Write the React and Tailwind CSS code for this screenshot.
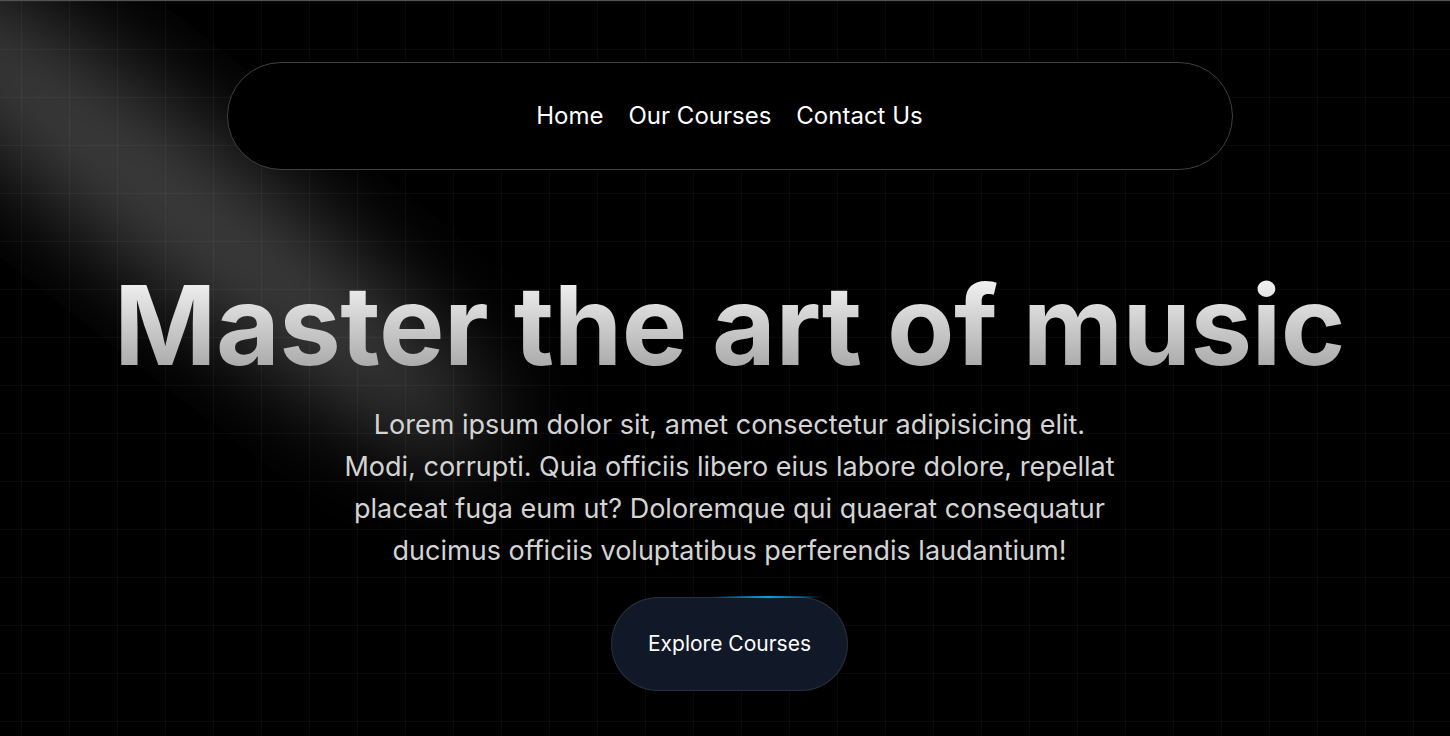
import React from "react";

const Spotlight = () => (
  <svg
    className="pointer-events-none absolute left-0 top-0 h-[736px] w-[1450px]"
    viewBox="0 0 1450 736"
    fill="none"
  >
    <defs>
      <filter id="beam" x="-50%" y="-50%" width="200%" height="200%">
        <feGaussianBlur stdDeviation="48" />
      </filter>
    </defs>
    <ellipse
      cx="165"
      cy="195"
      rx="415"
      ry="75"
      transform="rotate(38 165 195)"
      fill="white"
      fillOpacity="0.24"
      filter="url(#beam)"
    />
  </svg>
);

const NavBar = () => (
  <nav className="mx-auto flex h-[108px] w-[1006px] items-center justify-center gap-[25px] rounded-full border border-neutral-700 bg-black">
    <a href="#" className="text-[24px] text-white">
      Home
    </a>
    <a href="#" className="text-[24px] text-white">
      Our Courses
    </a>
    <a href="#" className="text-[24px] text-white">
      Contact Us
    </a>
  </nav>
);

export default function App() {
  return (
    <div
      className="relative h-[736px] w-full overflow-hidden border-t border-neutral-600 bg-black bg-[linear-gradient(to_right,rgba(255,255,255,0.04)_1px,transparent_1px),linear-gradient(to_bottom,rgba(255,255,255,0.04)_1px,transparent_1px)] bg-[size:48px_48px] bg-[position:21px_0px]"
      style={{ fontFamily: "Inter, 'Noto Sans', sans-serif" }}
    >
      <Spotlight />

      <div className="relative z-10 flex flex-col items-center pl-[9px] pt-[61px]">
        {/* Navigation pill */}
        <NavBar />

        {/* Hero */}
        <h1 className="mt-[100px] bg-gradient-to-b from-neutral-50 to-neutral-400 bg-clip-text text-[110px] font-bold leading-none tracking-[-0.005em] text-transparent">
          Master the art of music
        </h1>
        <p className="mt-[24px] max-w-[780px] text-center text-[27px] leading-[42px] text-neutral-300">
          Lorem ipsum dolor sit, amet consectetur adipisicing elit. Modi,
          corrupti. Quia officiis libero eius labore dolore, repellat placeat
          fuga eum ut? Doloremque qui quaerat consequatur ducimus officiis
          voluptatibus perferendis laudantium!
        </p>

        {/* CTA */}
        <button className="relative mt-[25px] flex h-[94px] w-[237px] items-center justify-center rounded-full border border-white/10 bg-[#111827] text-[21px] text-white">
          <span className="absolute -top-[2px] left-[100px] h-[2px] w-[112px] bg-gradient-to-r from-transparent via-sky-500 to-transparent" />
          Explore Courses
        </button>
      </div>
    </div>
  );
}
